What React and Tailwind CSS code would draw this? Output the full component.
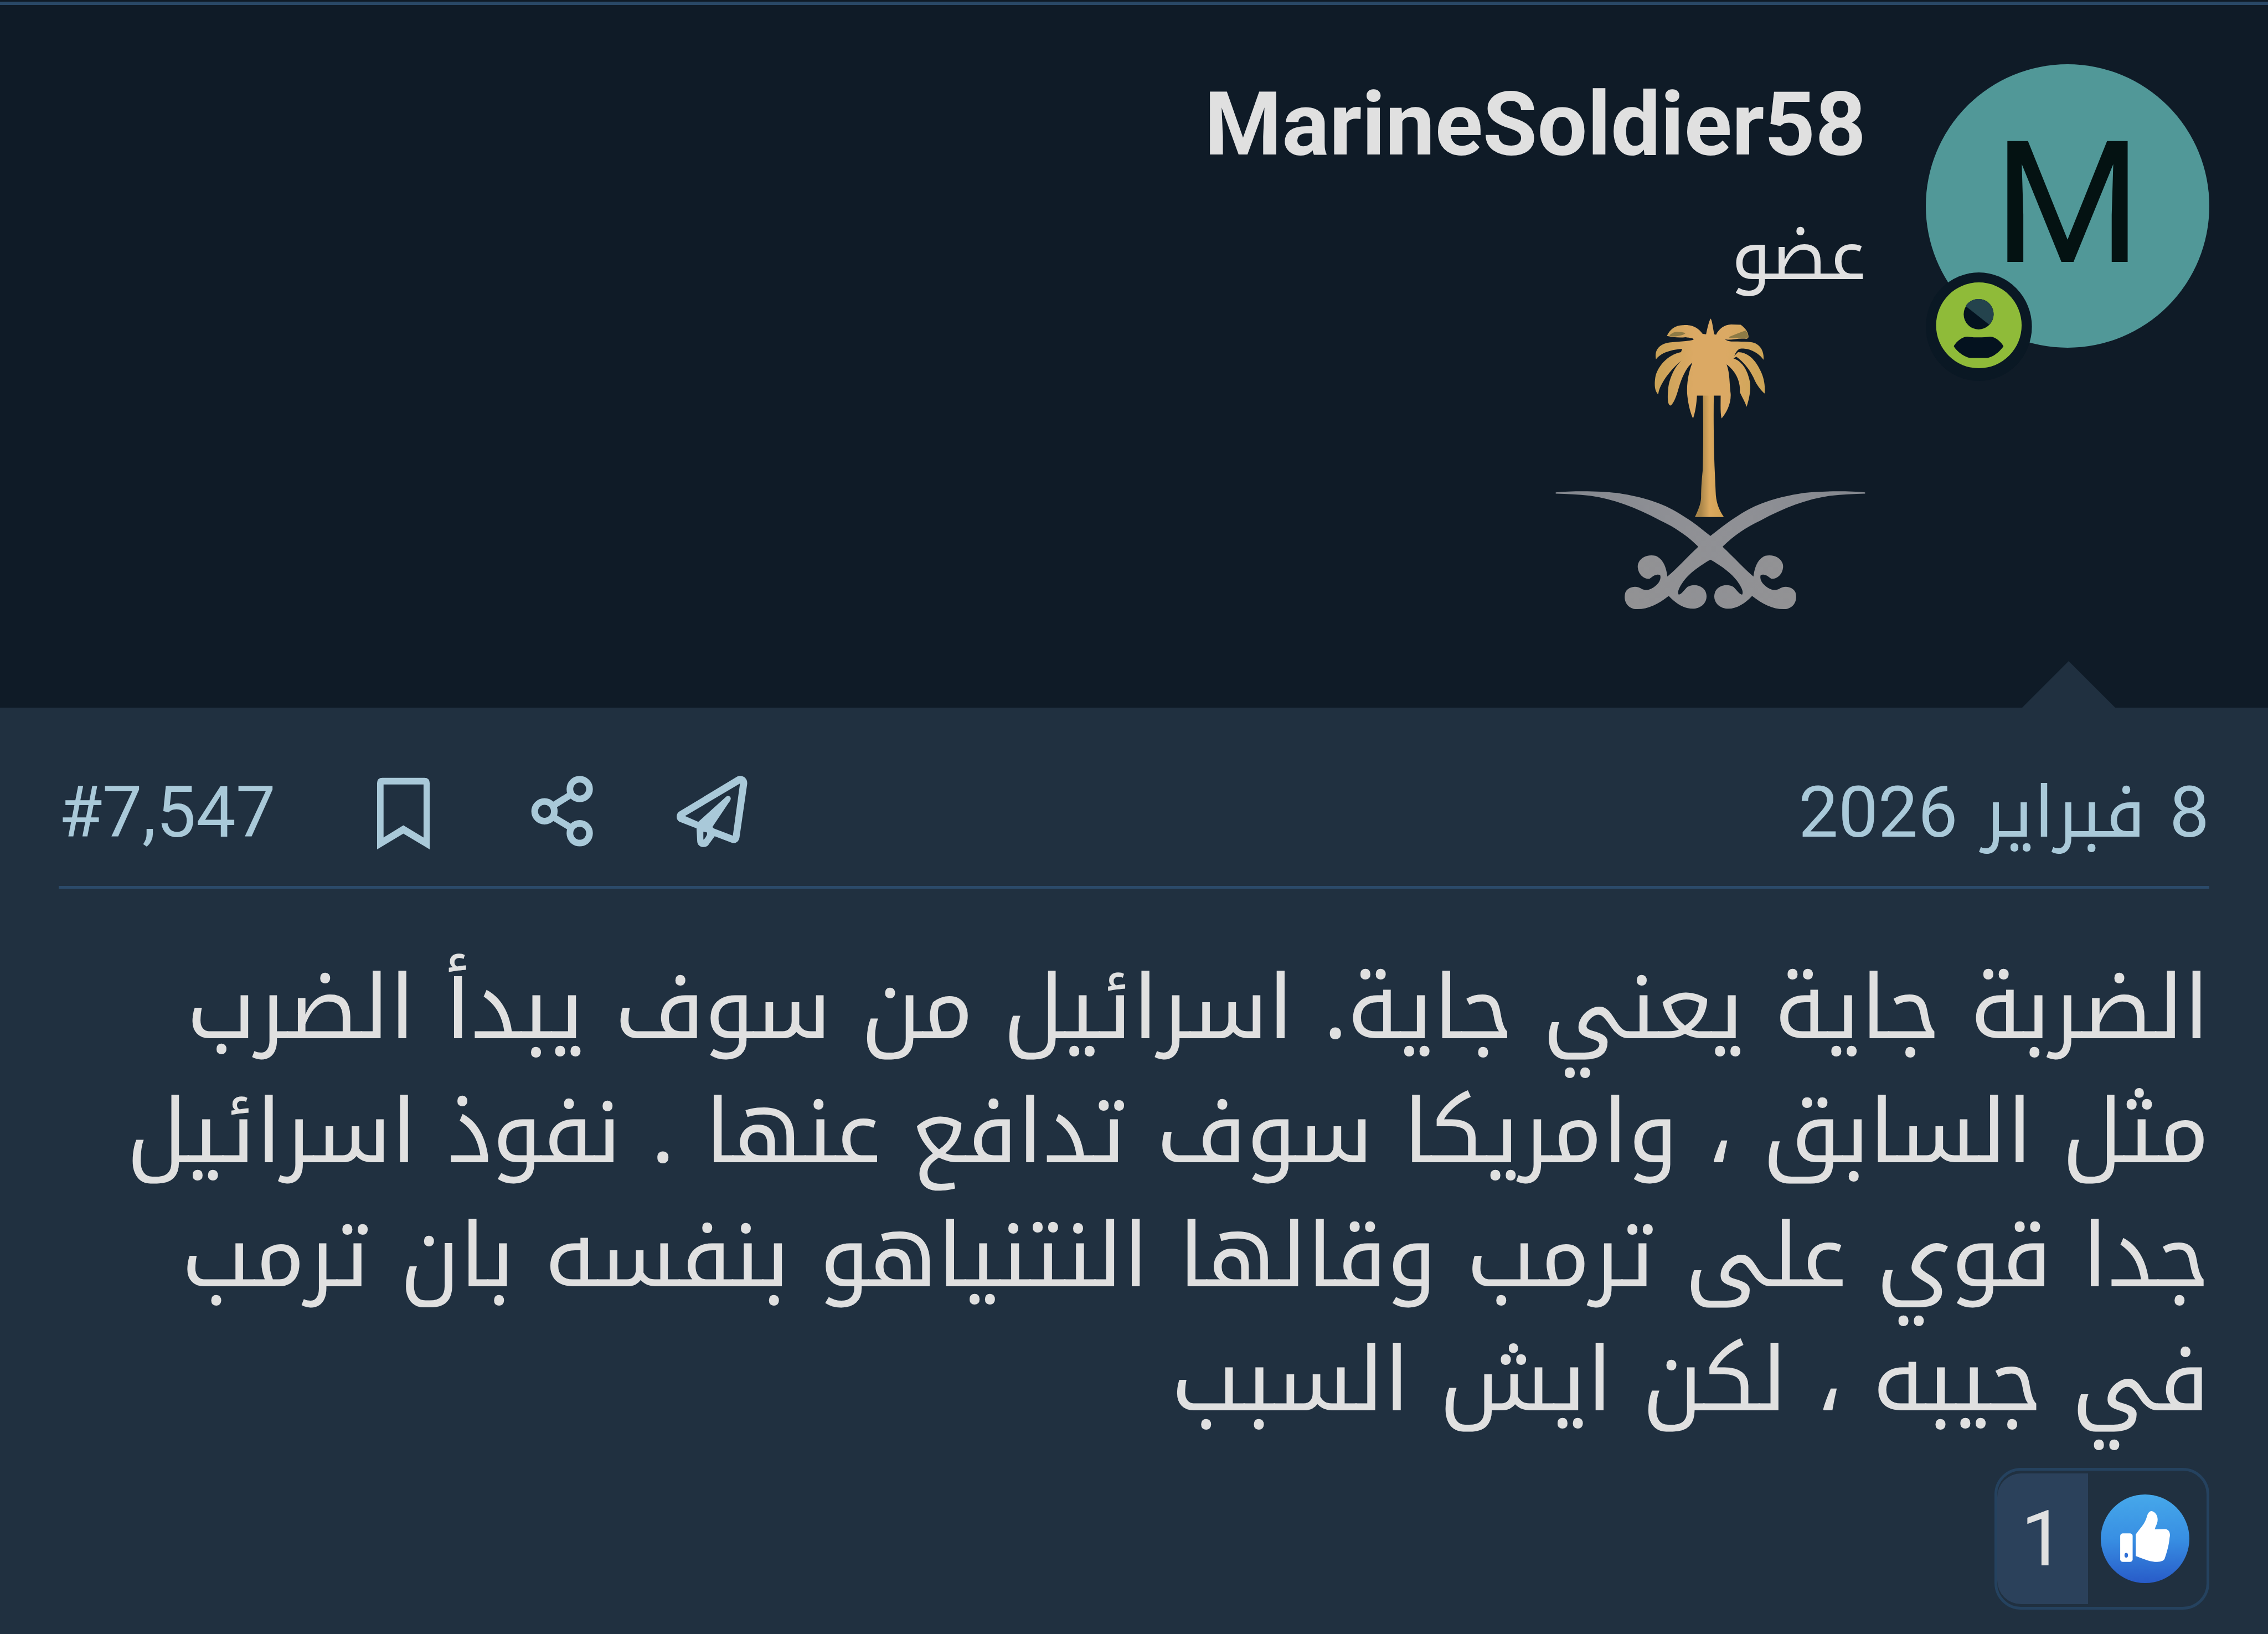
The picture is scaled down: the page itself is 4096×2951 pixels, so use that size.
const fontClass = 'font-[Roboto,"Noto_Kufi_Arabic","DejaVu_Sans",sans-serif]'
const arabicClass = 'font-["Noto_Kufi_Arabic","DejaVu_Sans",sans-serif]'
const iconLinkClass = 'block text-[#a9c9d9]'

const LINES = [
  'الضربة جاية يعني جاية. اسرائيل من سوف يبدأ الضرب',
  'مثل السابق ، وامريكا سوف تدافع عنها . نفوذ اسرائيل',
  'جدا قوي على ترمب وقالها النتنياهو بنفسه بان ترمب',
  'في جيبه ، لكن ايش السبب',
]

/* ── Icons ── */

function OnlineBadge() {
  return (
    <svg className="absolute top-[376px] left-0 w-[192px] h-[196px]" viewBox="119 1012 497 478" preserveAspectRatio="none" aria-hidden="true">
      <ellipse cx="367" cy="1251" rx="248" ry="239" fill="#0a1824" />
      <ellipse cx="367" cy="1245" rx="200" ry="189" fill="#8fbb39" />
      <ellipse cx="366" cy="1196" rx="70" ry="67" fill="#04121f" />
      <path d="M305 1160C318 1140 340 1129 366 1129C405 1129 436 1158 436 1196C436 1215 428 1230 415 1242Z" fill="#24434d" />
      <path d="M250 1337C258 1322 285 1296 312 1295C345 1299 388 1299 420 1295C448 1296 474 1322 482 1337C470 1356 432 1389 400 1389H334C300 1389 260 1356 250 1337Z" fill="#04121f" />
    </svg>
  )
}

const SWORD = 'M100 904C180 896 290 897 370 907C500 930 580 960 660 1018C710 1052 745 1085 780 1115L828 1162C880 1215 920 1265 968 1310C972 1270 985 1225 1020 1210C1060 1200 1100 1225 1098 1265C1095 1305 1065 1325 1045 1320C1025 1300 1010 1298 1000 1302C995 1315 1000 1335 1015 1350C1040 1375 1060 1380 1080 1370C1105 1350 1140 1360 1152 1385C1162 1420 1150 1455 1115 1466C1060 1472 1010 1445 962 1403C930 1440 890 1470 845 1464C805 1455 790 1420 798 1390C805 1355 850 1340 880 1360C895 1375 905 1395 918 1397C925 1385 917 1365 905 1345C880 1300 830 1260 778 1228C755 1205 735 1180 722 1162C680 1115 620 1070 560 1040C450 975 350 935 250 920C200 914 150 912 100 910Z'

function SaudiEmblem() {
  return (
    <svg className="block w-[562px] h-[532px]" viewBox="96 60 1366 1420" preserveAspectRatio="none" role="img" aria-label="شعار السعودية">
      <defs>
        <linearGradient id="crown" x1="0" x2="1">
          <stop offset="0" stopColor="#c9a256" />
          <stop offset="0.35" stopColor="#dba964" />
          <stop offset="0.65" stopColor="#dba964" />
          <stop offset="1" stopColor="#cda556" />
        </linearGradient>
        <linearGradient id="trunk" x1="0" x2="1">
          <stop offset="0.2" stopColor="#a98549" />
          <stop offset="0.5" stopColor="#dba95f" />
          <stop offset="1" stopColor="#d0a052" />
        </linearGradient>
        <linearGradient id="steel" x1="0" x2="1">
          <stop offset="0" stopColor="#84888f" />
          <stop offset="0.5" stopColor="#8f9095" />
          <stop offset="1" stopColor="#929294" />
        </linearGradient>
      </defs>
      <path fill="url(#trunk)" d="M746 430H794C792 560 794 700 798 800L802 900C803 950 815 985 838 1023H711C725 990 737 960 738 930C738 880 742 830 745 800C748 700 748 560 746 430Z" />
      <path fill="url(#crown)" d="M780 66C788 80 790 115 796 142L804 144C815 118 840 95 870 95L912 96C935 115 947 135 946 156C942 166 935 163 925 163C900 160 870 172 842 167C850 172 860 176 870 177C910 178 950 175 975 185C1005 200 1015 235 1012 265C1000 245 975 222 940 213C925 210 910 210 905 213C895 222 888 232 884 246L900 228C940 228 975 260 1000 320C1015 355 1020 390 1017 428C1005 415 985 395 968 350C950 310 925 275 893 250L880 258C915 270 940 310 950 360C960 400 950 450 938 492C930 465 915 440 908 420C912 370 890 320 850 287C865 330 862 380 868 430C870 475 850 520 828 548C822 520 824 480 824 438H720C718 480 712 520 703 548C690 520 680 470 677 430C674 370 685 320 700 278C675 300 655 345 640 400C630 440 618 475 604 486C590 480 590 450 594 400C600 350 625 290 660 262C625 290 595 330 577 360C560 390 552 410 550 432C535 415 532 390 537 350C545 300 590 240 650 228L655 212C620 215 565 225 540 263C535 235 540 205 575 188C610 175 670 180 705 168C705 160 690 160 670 156C640 160 610 155 588 150C600 120 625 97 660 98C700 95 725 110 745 140L760 142C765 115 772 80 780 66Z" />
      <path fill="#8d7a45" d="M600 146C620 126 640 128 670 136C660 148 625 156 600 150ZM862 154C890 142 920 128 934 124C944 138 946 148 944 158C920 160 890 158 862 160Z" />
      <path fill="url(#steel)" d={SWORD} />
      <path fill="url(#steel)" d={SWORD} transform="translate(1558 0) scale(-1 1)" />
    </svg>
  )
}

function SendIcon() {
  return (
    <svg className="block w-[128px] h-[133px]" viewBox="92 108 406 420" preserveAspectRatio="none" fill="currentColor" fillRule="evenodd" aria-hidden="true">
      <path d="M435 115C465 98 500 120 496 155L452 460C448 485 428 497 408 490L310 453L272 505C255 522 212 518 210 482L206 408L108 370C88 360 86 325 108 312ZM455 152L140 338L216 371L375 228C385 218 403 224 402 240C400 250 395 256 390 262L297 400C300 405 305 408 310 410L414 450ZM245 427L265 431L267 440C262 455 255 465 245 473Z" />
    </svg>
  )
}

function ShareIcon() {
  return (
    <svg className="block w-[112px] h-[133px]" viewBox="101 110 354 420" preserveAspectRatio="none" fill="none" stroke="currentColor" strokeWidth="38" aria-hidden="true">
      <circle cx="379" cy="186" r="56" />
      <circle cx="178" cy="313" r="56" />
      <circle cx="379" cy="438" r="56" />
      <path d="M232 278L328 218M232 348L328 406" />
    </svg>
  )
}

function BookmarkIcon() {
  return (
    <svg className="block w-[95px] h-[133px]" viewBox="58 110 300 420" preserveAspectRatio="none" fill="currentColor" fillRule="evenodd" aria-hidden="true">
      <path d="M58 530V152Q58 122 88 122H328Q358 122 358 152V530L208 440ZM95 160V462L208 393L323 462V160Z" />
    </svg>
  )
}

function LikeIcon() {
  return (
    <svg className="block w-[160px] h-[160px]" viewBox="707 260 456 510" preserveAspectRatio="none" role="img" aria-label="إعجاب">
      <defs>
        <linearGradient id="like" x1="0" y1="0" x2="0" y2="1">
          <stop offset="0" stopColor="#46a8ea" />
          <stop offset="0.5" stopColor="#388fe3" />
          <stop offset="1" stopColor="#285bc8" />
        </linearGradient>
      </defs>
      <ellipse cx="935" cy="515" rx="228" ry="255" fill="url(#like)" />
      <rect x="807" y="484" width="64" height="164" rx="14" fill="#fff" />
      <ellipse cx="838" cy="610" rx="9" ry="14" fill="#2f6fd6" />
      <path fill="#fff" d="M887 490C905 460 935 430 945 385C950 365 960 355 970 356C995 365 1005 395 997 425C992 440 987 450 985 461L1040 459C1060 462 1067 485 1061 510C1058 550 1048 590 1035 632C1025 648 1000 648 985 648C950 645 920 628 887 615Z" />
    </svg>
  )
}

/* ── Sections ── */

function UserHeader() {
  return (
    <header className="flex items-start gap-[108px] px-[106px] pt-[107px] pb-[173px]">
      <a href="#user" className="relative flex items-center justify-center pb-2 w-[512px] h-[512px] rounded-full bg-[#519898] text-[#041212] text-[307px] leading-none">
        M
        <OnlineBadge />
      </a>
      <div className="flex flex-col items-start pt-[15px] text-[#e0e0e0]">
        <h3 className="text-[160px] leading-[188px] font-bold"><a href="#user">MarineSoldier58</a></h3>
        <div className="mt-[51px] mb-[23px] text-[128px] leading-[180px]">عضو</div>
        <SaudiEmblem />
      </div>
    </header>
  )
}

function PostMeta() {
  return (
    <div className="flex items-center justify-between pt-[99px] pb-[43px] border-b-[5px] border-[#2b4a6a] text-[128px] leading-[180px] text-[#a9c9d9]">
      <a href="#date">
        <time dateTime="2026-02-08">8<span className={`leading-none ${arabicClass}`}> فبراير </span>2026</time>
      </a>
      <div className="flex items-center gap-[183px]">
        <div className="flex items-center gap-[151px]">
          <a href="#send" className={iconLinkClass} aria-label="إرسال"><SendIcon /></a>
          <a href="#share" className={iconLinkClass} aria-label="مشاركة"><ShareIcon /></a>
        </div>
        <a href="#bookmark" className={iconLinkClass} aria-label="حفظ"><BookmarkIcon /></a>
        <a href="#post" dir="ltr">#7,547</a>
      </div>
    </div>
  )
}

function Reaction({ count }) {
  return (
    <button type="button" className="flex items-stretch mt-[45px] w-[388px] rounded-[48px] border-[5px] border-[#25425f] cursor-pointer">
      <span className="py-[43px] ps-[31px] pe-[23px]"><LikeIcon /></span>
      <span className="flex flex-1 items-center justify-center my-[5px] rounded-l-[43px] bg-[#2b415b] text-[140px] leading-none text-[#e0e0e0]">{count}</span>
    </button>
  )
}

function App() {
  return (
    <article dir="rtl" className={`flex flex-col min-h-screen bg-[#0f1b27] ${fontClass}`}>
      <div className="mt-[3px] h-[6px] bg-[#294866]" />
      <UserHeader />
      <section className="relative grow px-[106px] pb-[45px] bg-[#203040]">
        <svg className="absolute bottom-full right-[276px] w-[168px] h-[84px]" viewBox="0 0 168 84" aria-hidden="true">
          <path d="M0 84L84 0L168 84Z" fill="#203040" />
        </svg>
        <PostMeta />
        <p className={`mt-[105px] text-[160px] leading-[224px] text-[#e0e0e0] ${arabicClass}`}>
          {LINES.map((line) => <span key={line} className="block">{line}</span>)}
        </p>
        <Reaction count={1} />
      </section>
    </article>
  )
}

export default App
